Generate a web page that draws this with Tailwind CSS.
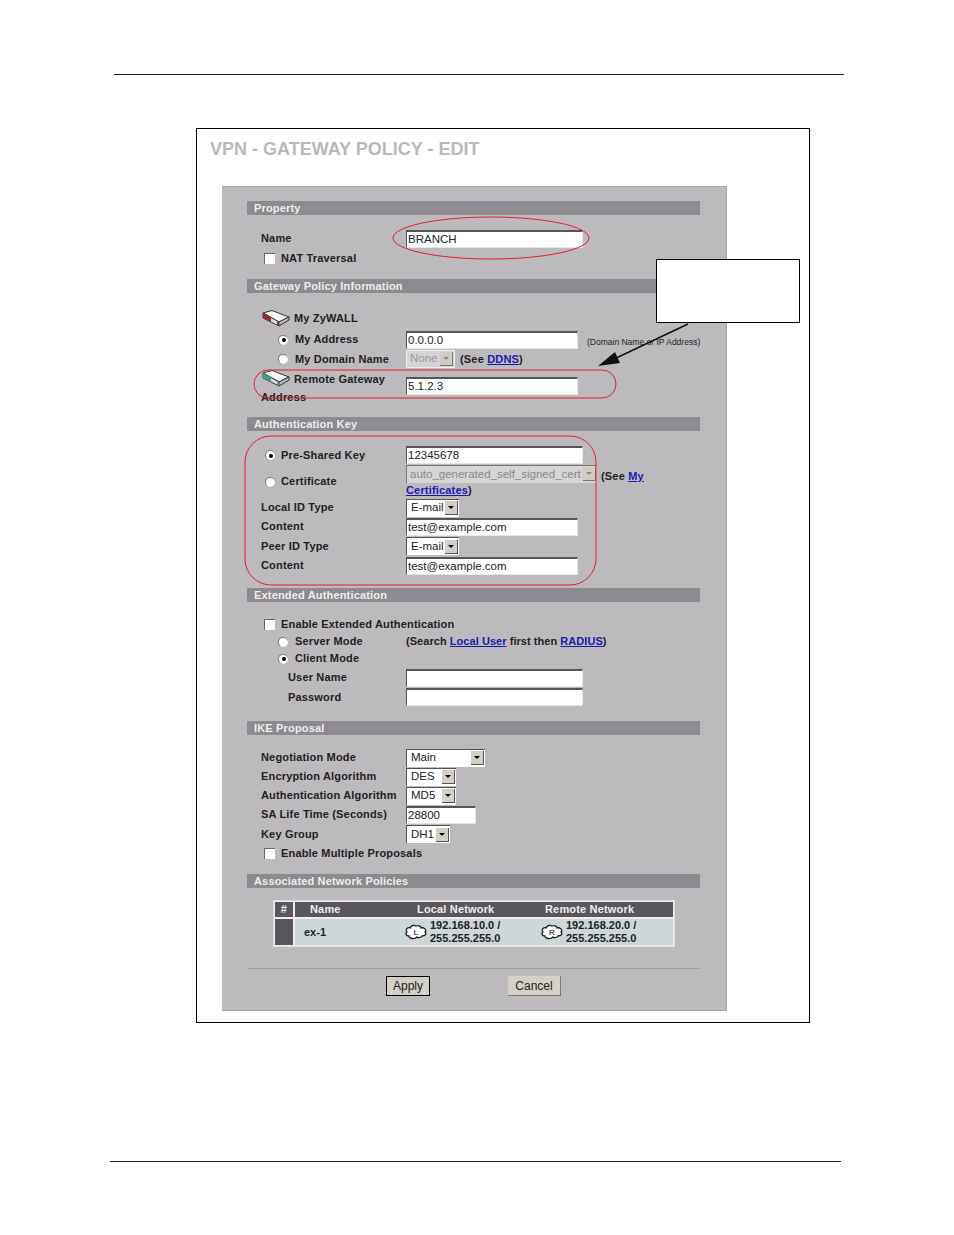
<!DOCTYPE html>
<html lang="en">
<head>
    <meta charset="UTF-8">
    <title>VPN - Gateway Policy - Edit</title>
    <script src="https://cdn.jsdelivr.net/npm/@tailwindcss/browser@4"></script>
</head>
<body class="bg-white font-['Liberation_Sans',Arial,sans-serif] text-[#222]">
<div class="w-[954px] h-[1235px] pt-[74px]">
    <div class="ml-[114px] w-[730px] h-px bg-[#222]"></div>

    <!-- figure frame -->
    <div class="relative ml-[196px] mt-[53px] w-[614px] h-[895px] border border-black">
        <h1 class="h-[57px] pl-[13px] pt-[9px] text-[18px] leading-[22px] font-bold text-[#b9b9b9]">VPN - GATEWAY POLICY - EDIT</h1>

        <!-- grey form panel -->
        <div class="ml-[25px] w-[505px] h-[825px] pt-[14px] pl-[25px] bg-[#bdbabe] border-t border-r border-b border-[#a5a3a6] text-[11px] font-bold tracking-[0.17px]">
            <div class="w-[453px] h-[14px] pl-[7px] leading-[14px] bg-[#8d8a90] text-[#eee]">Property</div>
            <div class="flex items-center h-[19px] mt-[14px] pl-[14px]">
                <span class="w-[145px]">Name</span>
                <div class="w-[177px] h-[18px] pl-[1px] bg-white border-t-2 border-l border-r border-b border-t-[#555] border-l-[#555] border-r-[#e8e6e8] border-b-[#e8e6e8] font-normal text-[11.5px] tracking-normal leading-[14px]">BRANCH</div>
            </div>
            <div class="flex items-center h-[20px] pl-[17px]">
                <span class="w-[11px] h-[11px] mr-[6px] bg-white border-t border-l border-[#666]"></span>NAT Traversal
            </div>

            <div class="w-[453px] h-[14px] mt-[11px] pl-[7px] leading-[14px] bg-[#8d8a90] text-[#eee]">Gateway Policy Information</div>
            <div class="flex items-center h-[18px] mt-[16px] pl-[15px]">
                <svg width="28" height="17" viewBox="0 0 28 17" class="mr-[4px]"><path d="M1 3 10 .5 27 7 17 12z" fill="#f4f4f4" stroke="#333"/><path d="M1 3 17 12v4L1 8z" fill="#dcdcdc" stroke="#333"/><path d="M17 12 27 7v3L17 16z" fill="#bbb" stroke="#333"/><path d="M1 3 9 7.500V12L1 8z" fill="#8f2f2f"/><path d="M15 11l2 1v4l-2-1z" fill="#8f2f2f"/></svg>
                My ZyWALL
            </div>
            <div class="flex items-center h-[19px] mt-[3px] pl-[31px]">
                <span class="flex items-center justify-center w-[10px] h-[10px] mr-[7px] rounded-full bg-white border-t border-l border-[#777]"><span class="w-[4px] h-[4px] rounded-full bg-black"></span></span>
                <span class="w-[111px]">My Address</span>
                <div class="w-[172px] h-[18px] pl-[1px] bg-white border-t-2 border-l border-r border-b border-t-[#555] border-l-[#555] border-r-[#e8e6e8] border-b-[#e8e6e8] font-normal text-[11.5px] tracking-normal leading-[14px]">0.0.0.0</div>
                <span class="ml-[9px] mt-[6px] text-[8.5px] font-normal tracking-normal whitespace-nowrap">(Domain Name or IP Address)</span>
            </div>
            <div class="flex items-center h-[20px] pl-[31px]">
                <span class="w-[10px] h-[10px] mr-[7px] rounded-full bg-white border-t border-l border-[#777]"></span>
                <span class="w-[111px]">My Domain Name</span>
                <div class="flex items-center justify-between w-[49px] h-[18px] pl-[3px] pr-[1px] bg-[#d6d4d6] border border-[#eee] font-normal text-[#999] text-[11.5px] tracking-normal">None<span class="flex items-center justify-center w-[13px] h-[14px] bg-[#cfcbc2] border-r border-b border-[#777]"><span class="border-x-[3px] border-t-[3px] border-x-transparent border-t-[#888]"></span></span></div>
                <span class="ml-[5px]">(See <a class="text-[#1a1ab0] underline">DDNS</a>)</span>
            </div>
            <div class="flex h-[35px] mt-px pl-[14px] leading-[18px]">
                <div class="w-[145px]">
                    <svg width="28" height="17" viewBox="0 0 28 17" class="inline-block ml-px mr-[4px] align-top"><path d="M1 3 10 .5 27 7 17 12z" fill="#f4f4f4" stroke="#333"/><path d="M1 3 17 12v4L1 8z" fill="#dcdcdc" stroke="#333"/><path d="M17 12 27 7v3L17 16z" fill="#bbb" stroke="#333"/><path d="M1 3 9 7.500V12L1 8z" fill="#4d9a94"/><path d="M15 11l2 1v4l-2-1z" fill="#4d9a94"/></svg>Remote Gateway Address
                </div>
                <div class="w-[172px] h-[18px] mt-[7px] pl-[1px] bg-white border-t-2 border-l border-r border-b border-t-[#555] border-l-[#555] border-r-[#e8e6e8] border-b-[#e8e6e8] font-normal text-[11.5px] tracking-normal leading-[14px]">5.1.2.3</div>
            </div>

            <div class="w-[453px] h-[14px] mt-[12px] pl-[7px] leading-[14px] bg-[#8d8a90] text-[#eee]">Authentication Key</div>
            <div class="flex items-center h-[20px] mt-[14px] pl-[18px]">
                <span class="flex items-center justify-center w-[10px] h-[10px] mr-[6px] rounded-full bg-white border-t border-l border-[#777]"><span class="w-[4px] h-[4px] rounded-full bg-black"></span></span>
                <span class="w-[125px]">Pre-Shared Key</span>
                <div class="w-[177px] h-[18px] pl-[1px] bg-white border-t-2 border-l border-r border-b border-t-[#555] border-l-[#555] border-r-[#e8e6e8] border-b-[#e8e6e8] font-normal text-[11.5px] tracking-normal leading-[14px]">12345678</div>
            </div>
            <div class="flex h-[33px] pl-[18px]">
                <div class="flex items-center h-[33px]">
                    <span class="w-[10px] h-[10px] mr-[6px] rounded-full bg-white border-t border-l border-[#777]"></span>
                    <span class="w-[125px]">Certificate</span>
                </div>
                <div class="w-[245px] leading-[14px]">
                    <div class="flex items-center">
                        <div class="flex items-center justify-between w-[191px] h-[18px] pl-[3px] pr-[1px] pb-[2px] bg-[#d6d4d6] border-t border-l border-[#777] font-normal text-[#888] text-[11.5px] tracking-normal whitespace-nowrap">auto_generated_self_signed_cert<span class="flex items-center justify-center w-[13px] h-[14px] bg-[#cfcbc2] border-r border-b border-[#777]"><span class="border-x-[3px] border-t-[3px] border-x-transparent border-t-[#888]"></span></span></div>
                        <span class="ml-[4px] mt-[4px] whitespace-nowrap">(See <a class="text-[#1a1ab0] underline">My</a></span>
                    </div>
                    <div><a class="text-[#1a1ab0] underline">Certificates</a>)</div>
                </div>
            </div>
            <div class="flex items-center h-[19px] pl-[14px]">
                <span class="w-[145px]">Local ID Type</span>
                <div class="flex items-center justify-between w-[53px] h-[18px] pl-[4px] pr-[1px] bg-white border-t border-l border-[#555] font-normal text-[11.5px] tracking-normal">E-mail<span class="flex items-center justify-center w-[13px] h-[14px] bg-[#d4d0c8] border-r border-b border-[#555]"><span class="border-x-[3px] border-t-[3px] border-x-transparent border-t-black"></span></span></div>
            </div>
            <div class="flex items-center h-[19px] pl-[14px]">
                <span class="w-[145px]">Content</span>
                <div class="w-[172px] h-[18px] pl-px bg-white border-t-2 border-l border-r border-b border-t-[#555] border-l-[#555] border-r-[#e8e6e8] border-b-[#e8e6e8] font-normal text-[11.5px] tracking-normal leading-[14px]">test@example.com</div>
            </div>
            <div class="flex items-center h-[20px] pl-[14px]">
                <span class="w-[145px]">Peer ID Type</span>
                <div class="flex items-center justify-between w-[53px] h-[18px] pl-[4px] pr-[1px] bg-white border-t border-l border-[#555] font-normal text-[11.5px] tracking-normal">E-mail<span class="flex items-center justify-center w-[13px] h-[14px] bg-[#d4d0c8] border-r border-b border-[#555]"><span class="border-x-[3px] border-t-[3px] border-x-transparent border-t-black"></span></span></div>
            </div>
            <div class="flex items-center h-[19px] pl-[14px]">
                <span class="w-[145px]">Content</span>
                <div class="w-[172px] h-[18px] pl-px bg-white border-t-2 border-l border-r border-b border-t-[#555] border-l-[#555] border-r-[#e8e6e8] border-b-[#e8e6e8] font-normal text-[11.5px] tracking-normal leading-[14px]">test@example.com</div>
            </div>

            <div class="w-[453px] h-[14px] mt-[13px] pl-[7px] leading-[14px] bg-[#8d8a90] text-[#eee]">Extended Authentication</div>
            <div class="flex items-center h-[18px] mt-[13px] pl-[17px]">
                <span class="w-[11px] h-[11px] mr-[6px] bg-white border-t border-l border-[#666]"></span>Enable Extended Authentication
            </div>
            <div class="flex items-center h-[17px] pl-[31px]">
                <span class="w-[10px] h-[10px] mr-[7px] rounded-full bg-white border-t border-l border-[#777]"></span>
                <span class="w-[111px]">Server Mode</span>
                <span class="tracking-[0.05px]">(Search <a class="text-[#1a1ab0] underline">Local User</a> first then <a class="text-[#1a1ab0] underline">RADIUS</a>)</span>
            </div>
            <div class="flex items-center h-[17px] pl-[31px]">
                <span class="flex items-center justify-center w-[10px] h-[10px] mr-[7px] rounded-full bg-white border-t border-l border-[#777]"><span class="w-[4px] h-[4px] rounded-full bg-black"></span></span>
                Client Mode
            </div>
            <div class="flex items-center h-[19px] mt-px pl-[41px]">
                <span class="w-[118px]">User Name</span>
                <div class="w-[177px] h-[18px] bg-white border-t-2 border-l border-r border-b border-t-[#555] border-l-[#555] border-r-[#e8e6e8] border-b-[#e8e6e8]"></div>
            </div>
            <div class="flex items-center h-[20px] pl-[41px]">
                <span class="w-[118px]">Password</span>
                <div class="w-[177px] h-[18px] bg-white border-t-2 border-l border-r border-b border-t-[#555] border-l-[#555] border-r-[#e8e6e8] border-b-[#e8e6e8]"></div>
            </div>

            <div class="w-[453px] h-[14px] mt-[14px] pl-[7px] leading-[14px] bg-[#8d8a90] text-[#eee]">IKE Proposal</div>
            <div class="flex items-center h-[19px] mt-[13px] pl-[14px]">
                <span class="w-[145px]">Negotiation Mode</span>
                <div class="flex items-center justify-between w-[79px] h-[18px] pl-[4px] pr-[1px] bg-white border-t border-l border-[#555] font-normal text-[11.5px] tracking-normal">Main<span class="flex items-center justify-center w-[13px] h-[14px] bg-[#d4d0c8] border-r border-b border-[#555]"><span class="border-x-[3px] border-t-[3px] border-x-transparent border-t-black"></span></span></div>
            </div>
            <div class="flex items-center h-[19px] pl-[14px]">
                <span class="w-[145px]">Encryption Algorithm</span>
                <div class="flex items-center justify-between w-[50px] h-[18px] pl-[4px] pr-[1px] bg-white border-t border-l border-[#555] font-normal text-[11.5px] tracking-normal">DES<span class="flex items-center justify-center w-[13px] h-[14px] bg-[#d4d0c8] border-r border-b border-[#555]"><span class="border-x-[3px] border-t-[3px] border-x-transparent border-t-black"></span></span></div>
            </div>
            <div class="flex items-center h-[19px] pl-[14px]">
                <span class="w-[145px]">Authentication Algorithm</span>
                <div class="flex items-center justify-between w-[50px] h-[18px] pl-[4px] pr-[1px] bg-white border-t border-l border-[#555] font-normal text-[11.5px] tracking-normal">MD5<span class="flex items-center justify-center w-[13px] h-[14px] bg-[#d4d0c8] border-r border-b border-[#555]"><span class="border-x-[3px] border-t-[3px] border-x-transparent border-t-black"></span></span></div>
            </div>
            <div class="flex items-center h-[19px] pl-[14px]">
                <span class="w-[145px]">SA Life Time (Seconds)</span>
                <div class="w-[70px] h-[18px] pl-[1px] bg-white border-t-2 border-l border-r border-b border-t-[#555] border-l-[#555] border-r-[#e8e6e8] border-b-[#e8e6e8] font-normal text-[11.5px] tracking-normal leading-[14px]">28800</div>
            </div>
            <div class="flex items-center h-[20px] pl-[14px]">
                <span class="w-[145px]">Key Group</span>
                <div class="flex items-center justify-between w-[44px] h-[18px] pl-[4px] pr-[1px] bg-white border-t border-l border-[#555] font-normal text-[11.5px] tracking-normal">DH1<span class="flex items-center justify-center w-[13px] h-[14px] bg-[#d4d0c8] border-r border-b border-[#555]"><span class="border-x-[3px] border-t-[3px] border-x-transparent border-t-black"></span></span></div>
            </div>
            <div class="flex items-center h-[19px] pl-[17px]">
                <span class="w-[11px] h-[11px] mr-[6px] bg-white border-t border-l border-[#666]"></span>Enable Multiple Proposals
            </div>

            <div class="w-[453px] h-[14px] mt-[11px] pl-[7px] leading-[14px] bg-[#8d8a90] text-[#eee]">Associated Network Policies</div>

            <!-- policy table -->
            <div class="ml-[26px] mt-[12px] w-[402px] h-[47px] grid grid-cols-[18px_1fr] grid-rows-[15px_1fr] gap-[2px] p-px bg-[#eeeeee] border border-[#ddd]">
                <div class="bg-[#5a565e] text-[#eee] text-center leading-[15px]">#</div>
                <div class="flex bg-[#5a565e] text-[#eee] leading-[15px]">
                    <span class="w-[122px] pl-[15px]">Name</span>
                    <span class="w-[128px]">Local Network</span>
                    <span>Remote Network</span>
                </div>
                <div class="bg-[#5a565e]"></div>
                <div class="flex items-center bg-[#cdd6d8] leading-[13px] tracking-normal">
                    <span class="w-[110px] pl-[9px]">ex-1</span>
                    <svg width="22" height="16" viewBox="0 0 22 16" class="mr-[3px]"><path d="M4 12C1 12 0 9 2 8 0 5 3 3 5 4c1-3 4-3 6-2 2-1 5 0 5 2 3-1 6 2 4 4 2 2 0 4-3 4-1 2-4 2-5 1-2 2-5 2-6 1-1 0-2 0-2-2z" fill="#fff" stroke="#222" stroke-width="1.3"/><text x="11" y="11" font-size="8" font-weight="bold" text-anchor="middle" fill="#555">L</text></svg>
                    <span class="w-[111px]">192.168.10.0 /<br>255.255.255.0</span>
                    <svg width="22" height="16" viewBox="0 0 22 16" class="mr-[3px]"><path d="M4 12C1 12 0 9 2 8 0 5 3 3 5 4c1-3 4-3 6-2 2-1 5 0 5 2 3-1 6 2 4 4 2 2 0 4-3 4-1 2-4 2-5 1-2 2-5 2-6 1-1 0-2 0-2-2z" fill="#fff" stroke="#222" stroke-width="1.3"/><text x="11" y="11" font-size="8" font-weight="bold" text-anchor="middle" fill="#555">R</text></svg>
                    <span>192.168.20.0 /<br>255.255.255.0</span>
                </div>
            </div>

            <div class="w-[453px] h-px mt-[21px] bg-[#a09da2]"></div>
            <div class="flex mt-[7px] pl-[139px] font-normal tracking-normal text-[12px]">
                <button class="w-[44px] h-[20px] bg-[#d4d0c8] border border-black">Apply</button>
                <button class="w-[53px] h-[20px] ml-[78px] bg-[#d4d0c8] border-r border-b border-[#777]">Cancel</button>
            </div>
        </div>

        <!-- callout annotation over the form -->
        <div class="absolute left-[459px] top-[130px] w-[144px] h-[64px] bg-white border border-black"></div>
        <svg class="absolute left-0 top-0 pointer-events-none" width="612" height="893" viewBox="0 0 612 893" fill="none">
            <ellipse cx="294" cy="109" rx="98" ry="21" stroke="#e0202a" stroke-width="1"/>
            <rect x="57" y="241" width="362" height="28" rx="14" stroke="#e0202a"/>
            <rect x="48" y="307" width="351" height="149" rx="26" stroke="#e0202a"/>
            <path d="M491 195 415 231" stroke="#111" stroke-width="1.5"/>
            <path d="M401 237 418 223 423 234z" fill="#111"/>
        </svg>
    </div>

    <div class="ml-[110px] mt-[138px] w-[731px] h-px bg-[#222]"></div>
</div>
</body>
</html>
